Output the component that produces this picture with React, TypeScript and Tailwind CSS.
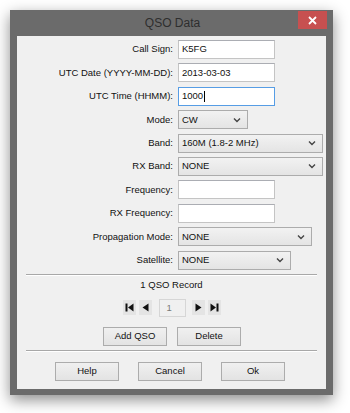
import React from 'react';

const font = { fontFamily: '"Liberation Sans", Arial, sans-serif' };

function Chevron() {
  return (
    <svg width="8" height="6" viewBox="0 0 8 6" className="shrink-0">
      <path d="M1 1.5 L4 4.5 L7 1.5" fill="none" stroke="#444" strokeWidth="1.4" />
    </svg>
  );
}

function TextBox({ value, focus, caret }: { value?: string; focus?: boolean; caret?: boolean }) {
  return (
    <div
      className={`w-[97px] h-[19px] bg-white border flex items-center pl-[3px] text-[9.5px] text-[#111] ${
        focus ? 'border-[#569de5]' : 'border-[#c4c4c4] border-t-[#abadb3]'
      }`}
    >
      {value}
      {caret && <span className="inline-block w-px h-[11px] bg-black ml-px" />}
    </div>
  );
}

function Select({ value, w }: { value: string; w: string }) {
  return (
    <div
      className={`${w} h-[19px] border border-[#acacac] bg-gradient-to-b from-[#f2f2f2] to-[#e4e4e4] flex items-center justify-between pl-[3px] pr-[6px] text-[9.5px] text-[#111]`}
    >
      <span>{value}</span>
      <Chevron />
    </div>
  );
}

function Btn({ label }: { label: string }) {
  return (
    <div className="w-[64px] h-[19px] border border-[#acacac] bg-gradient-to-b from-[#f0f0f0] to-[#e3e3e3] flex items-center justify-center text-[9.5px] text-[#111]">
      {label}
    </div>
  );
}

function NavBtn({ kind }: { kind: 'first' | 'prev' | 'next' | 'last' }) {
  return (
    <div className="w-[13px] h-[15px] bg-[#e4e4e4] flex items-center justify-center">
      <svg width="9" height="9" viewBox="0 0 9 9">
        {kind === 'first' && (
          <>
            <rect x="0.5" y="0.5" width="2" height="8" fill="#111" />
            <path d="M8.5 0.5 L8.5 8.5 L3 4.5 Z" fill="#111" />
          </>
        )}
        {kind === 'prev' && <path d="M7.5 0.5 L7.5 8.5 L1.5 4.5 Z" fill="#111" />}
        {kind === 'next' && <path d="M1.5 0.5 L1.5 8.5 L7.5 4.5 Z" fill="#111" />}
        {kind === 'last' && (
          <>
            <path d="M0.5 0.5 L0.5 8.5 L6 4.5 Z" fill="#111" />
            <rect x="6.5" y="0.5" width="2" height="8" fill="#111" />
          </>
        )}
      </svg>
    </div>
  );
}

const rows: { label: string; ctrl: React.ReactNode }[] = [
  { label: 'Call Sign:', ctrl: <TextBox value="K5FG" /> },
  { label: 'UTC Date (YYYY-MM-DD):', ctrl: <TextBox value="2013-03-03" /> },
  { label: 'UTC Time (HHMM):', ctrl: <TextBox value="1000" focus caret /> },
  { label: 'Mode:', ctrl: <Select value="CW" w="w-[70px]" /> },
  { label: 'Band:', ctrl: <Select value="160M (1.8-2 MHz)" w="w-[145px]" /> },
  { label: 'RX Band:', ctrl: <Select value="NONE" w="w-[145px]" /> },
  { label: 'Frequency:', ctrl: <TextBox /> },
  { label: 'RX Frequency:', ctrl: <TextBox /> },
  { label: 'Propagation Mode:', ctrl: <Select value="NONE" w="w-[134px]" /> },
  { label: 'Satellite:', ctrl: <Select value="NONE" w="w-[113px]" /> },
];

export default function App() {
  return (
    <div className="w-[350px] h-[413px] bg-white overflow-hidden" style={font}>
      <div className="ml-[10px] mt-[10px] w-[323px] h-[385px] bg-[#6b6b6b] shadow-[0_5px_14px_rgba(0,0,0,0.45)] flex flex-col px-[7px] pb-[6px]">
        {/* title bar */}
        <div className="relative h-[26px] flex items-center justify-center">
          <span className="text-[12px] text-[#2e2e2e] pl-[2px]">QSO Data</span>
          <div className="absolute right-[-1px] top-[1px] w-[29px] h-[18px] bg-[#c75050] flex items-center justify-center">
            <svg width="9" height="9" viewBox="0 0 9 9">
              <path d="M1 1 L8 8 M8 1 L1 8" stroke="#fff" strokeWidth="1.8" />
            </svg>
          </div>
        </div>

        {/* body */}
        <div className="flex-1 bg-[#f0f0f0] flex flex-col pt-[4px]">
          <div className="grid grid-cols-[156px_1fr] gap-x-[5px] gap-y-[4.4px]">
            {rows.map((r) => (
              <React.Fragment key={r.label}>
                <div className="text-right text-[9.5px] text-[#111] self-center">{r.label}</div>
                <div>{r.ctrl}</div>
              </React.Fragment>
            ))}
          </div>

          <div className="mx-[9px] mt-[4px] border-t border-[#a8a8a8] border-b border-b-white" />

          <div className="mt-[2px] text-center text-[9.5px] text-[#111]">1 QSO Record</div>

          <div className="mt-[7px] flex items-center justify-center">
            <div className="flex gap-[3px] items-center">
              <NavBtn kind="first" />
              <NavBtn kind="prev" />
            </div>
            <div className="ml-[7px] mr-[6px] w-[27px] h-[18px] border border-[#d6d6d6] bg-[#f0f0f0] flex items-center pl-[7px] text-[9.5px] text-[#7a7a7a]">
              1
            </div>
            <div className="flex gap-[3px] items-center">
              <NavBtn kind="next" />
              <NavBtn kind="last" />
            </div>
          </div>

          <div className="mt-[10px] flex justify-center gap-[10px] pl-[1px]">
            <Btn label="Add QSO" />
            <Btn label="Delete" />
          </div>

          <div className="mx-[9px] mt-[4px] border-t border-[#a8a8a8] border-b border-b-white" />

          <div className="mt-[10px] flex justify-center gap-[19px] pr-[3px]">
            <Btn label="Help" />
            <Btn label="Cancel" />
            <Btn label="Ok" />
          </div>
        </div>
      </div>
    </div>
  );
}
